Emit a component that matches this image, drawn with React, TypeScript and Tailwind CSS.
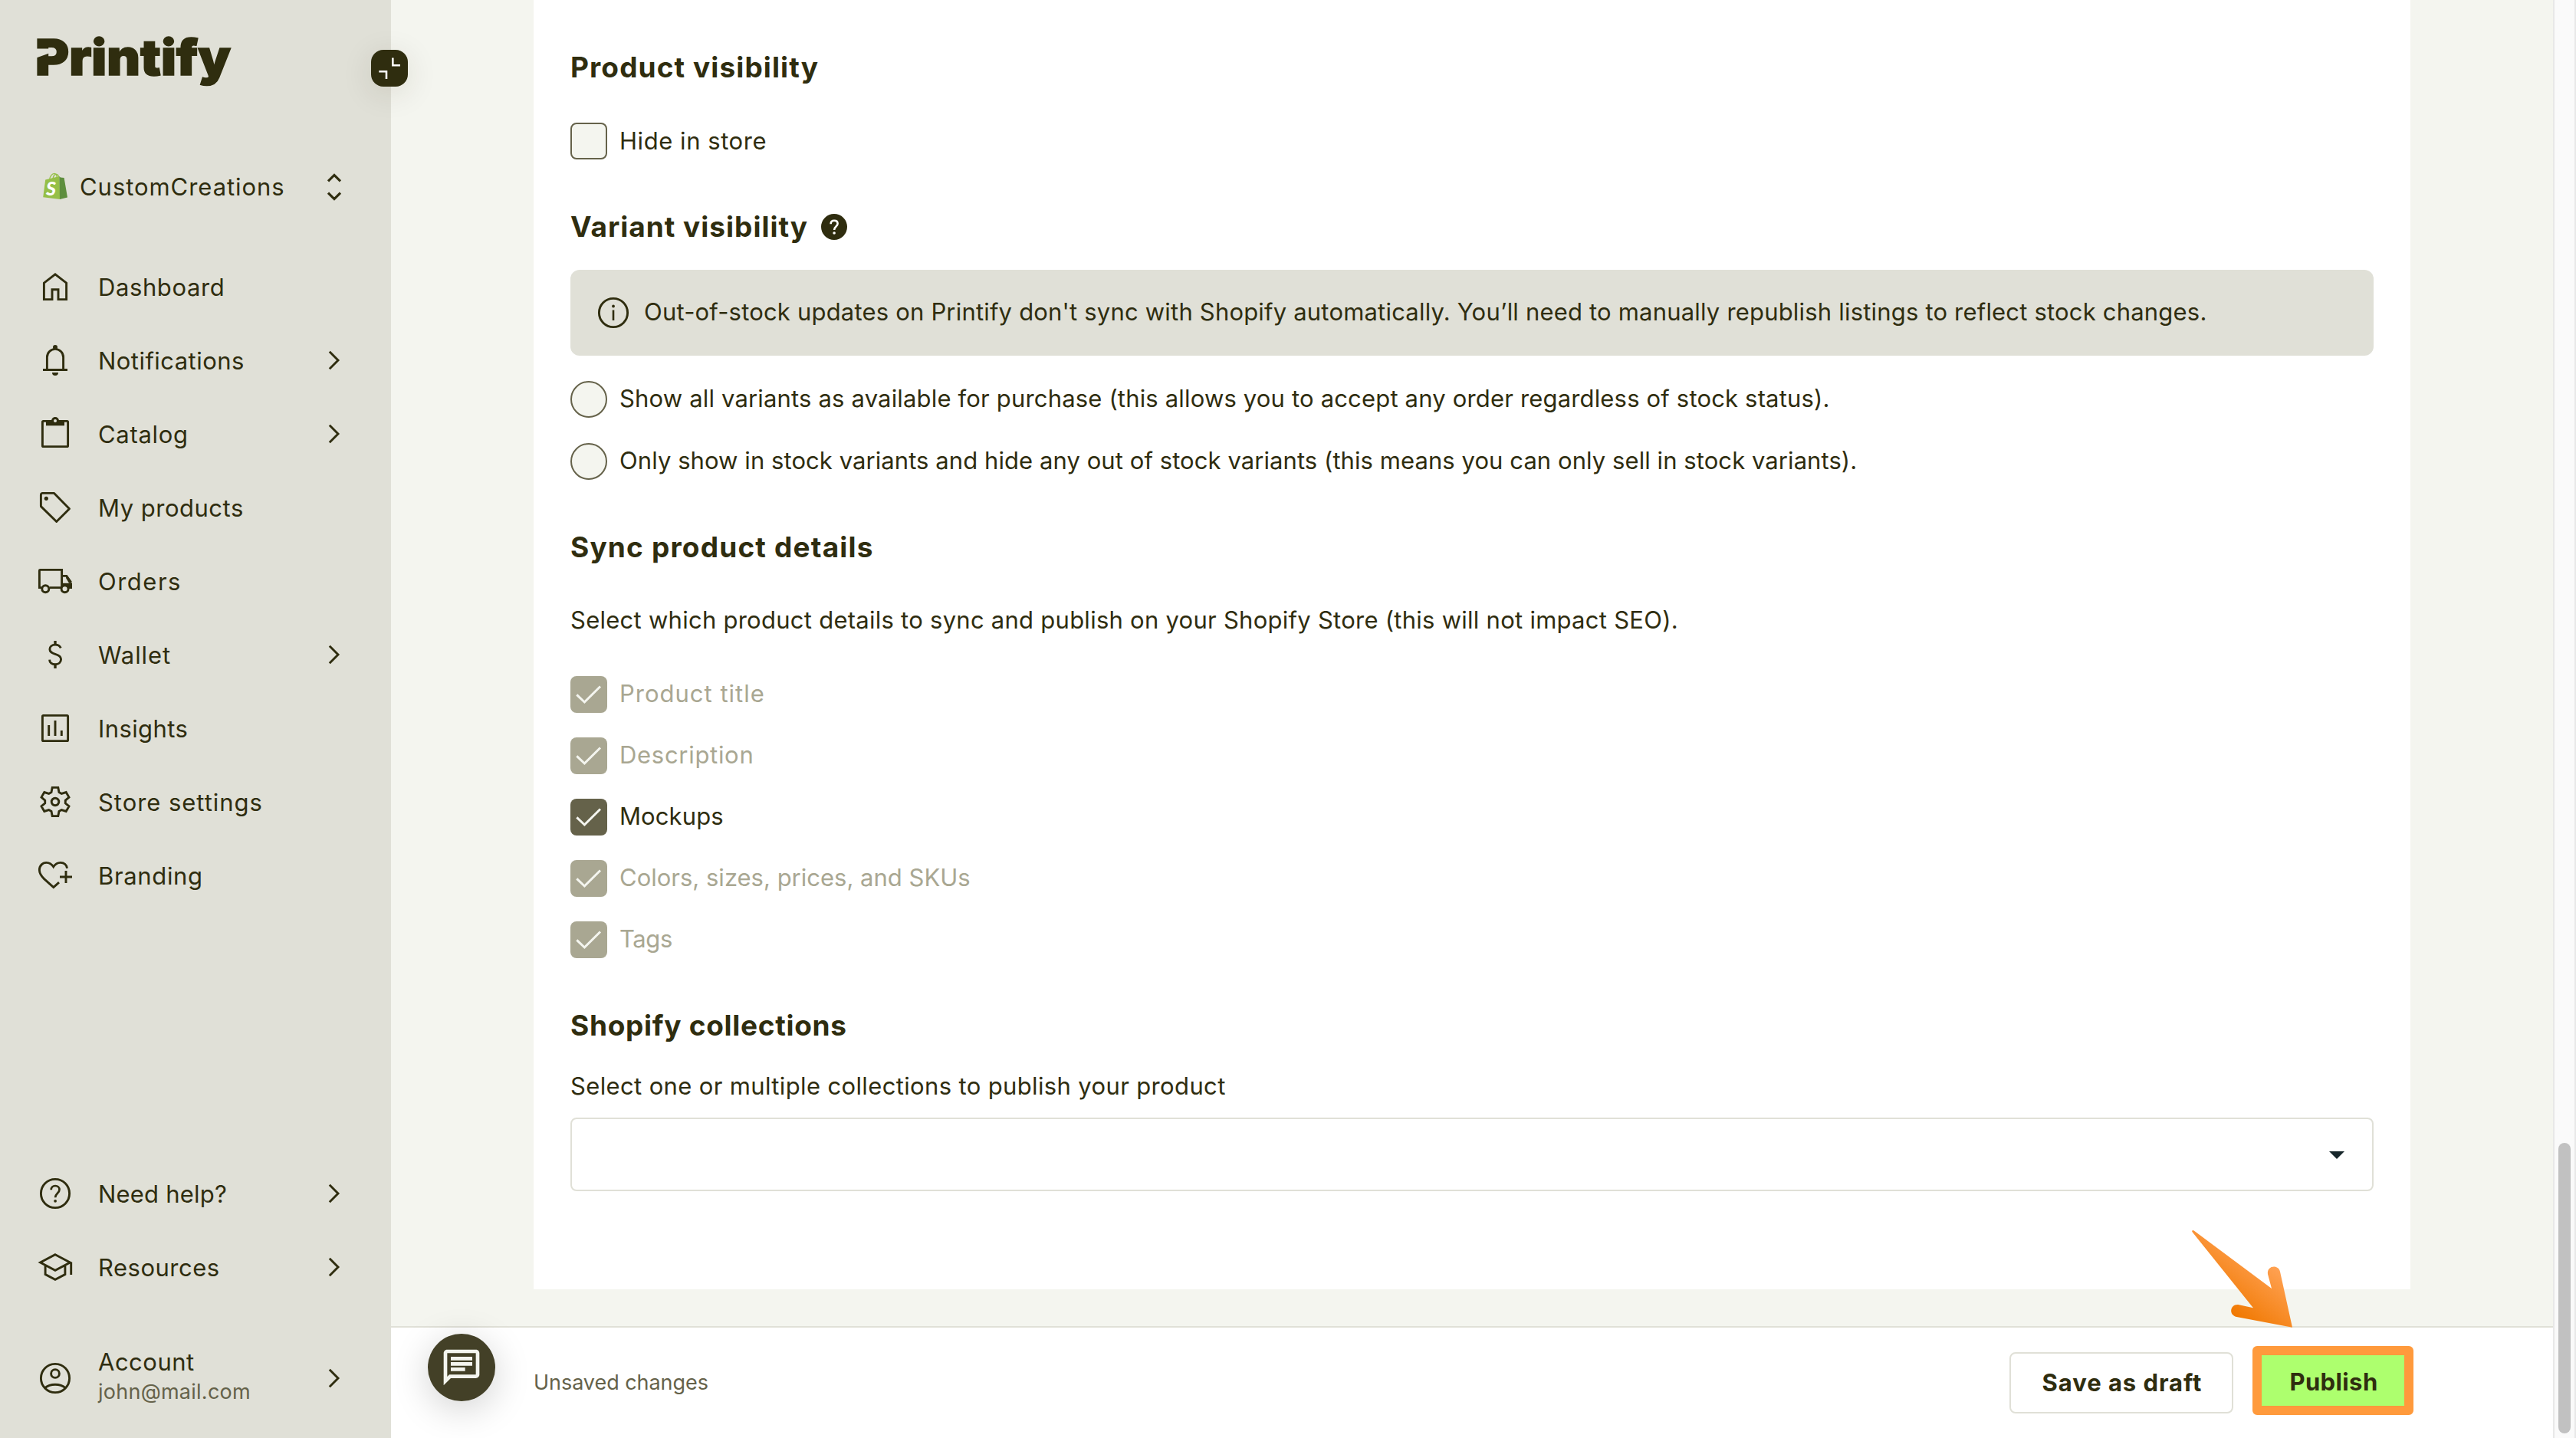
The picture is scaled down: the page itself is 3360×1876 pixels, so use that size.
import clsx from "clsx";
import type { ReactNode } from "react";

const svgProps = {
  viewBox: "0 0 48 48",
  fill: "none",
  stroke: "currentColor",
  strokeWidth: 2.9,
  className: "size-12 shrink-0",
};

function HomeIcon() {
  return (
    <svg {...svgProps}>
      <path d="M9.4 40.6V19.2L24 7.9l14.6 11.3v21.4H28V27.7h-8v12.9z" />
    </svg>
  );
}

function BellIcon() {
  return (
    <svg {...svgProps}>
      <path d="M13.4 36V20a10.6 10.6 0 0 1 21.2 0v16M8 36.5h32" />
      <circle cx="24" cy="7" r="3" fill="currentColor" stroke="none" />
      <path d="M20 40h8a4 4 0 0 1-8 0z" fill="currentColor" stroke="none" />
    </svg>
  );
}

function ClipboardIcon() {
  return (
    <svg {...svgProps}>
      <rect x="7.4" y="7.4" width="33.2" height="33.2" rx="1.2" />
      <path d="M12 7h24v6.3H12z" fill="currentColor" stroke="none" />
      <circle cx="24" cy="7" r="5" fill="currentColor" stroke="none" />
      <circle cx="24" cy="7" r="2" fill="#e0e0d7" stroke="none" />
    </svg>
  );
}

function TagIcon() {
  return (
    <svg {...svgProps} strokeLinejoin="round">
      <path d="M7.4 5.4h15.2l19.9 20.3-16.8 16.8L5.4 22.6V7.4a2 2 0 0 1 2-2z" />
      <circle cx="12.3" cy="12.3" r="2.6" fill="currentColor" stroke="none" />
    </svg>
  );
}

function TruckIcon() {
  return (
    <svg {...svgProps}>
      <path d="M6 32.6H3.4V10.4a1 1 0 0 1 1-1h28.2v23.2H16.5M32.6 17.4h6.2l5.8 8.2" />
      <path d="M34 26.8h12V34H34z" fill="currentColor" stroke="none" />
      <path d="M39.6 16.5 46 26.8h-4L38 20z" fill="currentColor" stroke="none" />
      <circle cx="11.3" cy="34.2" r="4.5" fill="#e0e0d7" />
      <circle cx="36.6" cy="34.2" r="4.5" fill="#e0e0d7" />
    </svg>
  );
}

function DollarIcon() {
  return (
    <svg {...svgProps}>
      <path d="M24 6v5.4M24 36.6V42" strokeWidth="3.4" />
      <path d="M31.3 15.4c-1.2-2.9-3.8-4.3-7.3-4.3-4.3 0-7.1 2.4-7.1 6 0 3.9 3 5.1 7.1 6.2 4.8 1.3 7.6 2.9 7.6 6.8 0 4.1-3.3 6.7-7.6 6.7s-7.3-2.3-7.4-6.2" />
    </svg>
  );
}

function InsightsIcon() {
  return (
    <svg {...svgProps}>
      <rect x="7.4" y="7.4" width="33.2" height="33.2" rx="1.2" />
      <path d="M15.7 20v14M24 14v20M32.3 27v7" />
    </svg>
  );
}

function GearIcon() {
  return (
    <svg {...svgProps}>
      <g transform="translate(24 24)">
        <path d="M-5-12.5-3.8-18.6H3.8L5-12.5 8.3-10.6 14.2-12.5 18-5.9 13.3-1.9V1.9L18 5.9 14.2 12.5 8.3 10.6 5 12.5 3.8 18.6H-3.8L-5 12.5-8.3 10.6-14.2 12.5-18 5.9-13.3 1.9V-1.9L-18-5.9-14.2-12.5-8.3-10.6z" />
        <circle r="4.8" />
      </g>
    </svg>
  );
}

function HeartPlusIcon() {
  return (
    <svg {...svgProps}>
      <path d="M29 33.2l-7.2 6.3L9.6 28.6C5.8 24.8 3.4 21.4 3.4 16.9c0-5.4 4-9.5 9-9.5 4 0 7.1 2 9.3 5.4 2.2-3.4 5.3-5.4 9.2-5.4 4.6 0 7.8 2.8 8.7 7.4" />
      <path d="M38 18v16M30 26h16" />
    </svg>
  );
}

function HelpIcon() {
  return (
    <svg {...svgProps}>
      <circle cx="24" cy="24" r="18.6" />
      <path d="M18.7 19.3c0-3.3 2.2-5.3 5.4-5.3s5.4 2 5.4 5c0 4.6-5.4 5-5.4 10.3" strokeWidth="2.7" />
      <circle cx="24.1" cy="33.8" r="1.9" fill="currentColor" stroke="none" />
    </svg>
  );
}

function GraduationIcon() {
  return (
    <svg {...svgProps}>
      <path d="M24 7.7 43.4 18 24 28.4 4.6 18zM11.1 21.6v12L24 40.4l12.9-6.8v-12M44.7 17.5V34" />
    </svg>
  );
}

function AccountIcon() {
  return (
    <svg {...svgProps}>
      <circle cx="24" cy="24" r="18.6" />
      <circle cx="24" cy="18" r="5.4" />
      <path d="M10.8 36.6c3.3-3 7.8-4.3 13.2-4.3s9.9 1.3 13.2 4.3" />
    </svg>
  );
}

function ChevronIcon() {
  return (
    <svg {...svgProps}>
      <path d="M17.8 12.8 29 24 17.8 35.2" />
    </svg>
  );
}

function UpDownIcon() {
  return (
    <svg {...svgProps} strokeWidth="3.2">
      <path d="M16 16.3l8-7.9 8 7.9M16 31.7l8 7.9 8-7.9" />
    </svg>
  );
}

function ShopifyIcon() {
  return (
    <svg viewBox="0 0 48 48" className="size-12 shrink-0">
      <path
        d="M16.5 14.5c.8-4.500 3.500-8.200 6.300-8.200 2.200 0 3.400 2.400 3.400 5.700M21 13c.7-3.600 2.600-6 4.700-5.700 1.800.3 2.800 2.200 3 4.500"
        fill="none"
        stroke="#95bf47"
        strokeWidth="1.3"
      />
      <path d="M11.2 14.6 29.3 10 30.3 40 8.200 37.200z" fill="#95bf47" />
      <path d="M29.300 10 31 11.600 35.600 12 40 37.600 30 40z" fill="#5e8e3e" />
      <text x="12" y="35" fontSize="25" fontWeight="900" fontStyle="italic" fontFamily="Lato, sans-serif" fill="#fff">
        S
      </text>
    </svg>
  );
}

const mainMenu = [
  { label: "Dashboard", icon: HomeIcon, tracking: "tracking-[0.6px]" },
  { label: "Notifications", icon: BellIcon, tracking: "tracking-[0.45px]", expandable: true },
  { label: "Catalog", icon: ClipboardIcon, tracking: "tracking-[0.7px]", expandable: true },
  { label: "My products", icon: TagIcon, tracking: "tracking-[0.5px]" },
  { label: "Orders", icon: TruckIcon, tracking: "tracking-[1.5px]" },
  { label: "Wallet", icon: DollarIcon, tracking: "tracking-[0.9px]", expandable: true },
  { label: "Insights", icon: InsightsIcon, tracking: "tracking-[0.4px]" },
  { label: "Store settings", icon: GearIcon, tracking: "tracking-[0.95px]" },
  { label: "Branding", icon: HeartPlusIcon, tracking: "tracking-[0.65px]" },
];

const helpMenu = [
  { label: "Need help?", icon: HelpIcon, tracking: "tracking-[0.2px]", expandable: true },
  { label: "Resources", icon: GraduationIcon, tracking: "tracking-[0.5px]", expandable: true },
];

const syncOptions = [
  { label: "Product title", tracking: "tracking-[1px]", disabled: true },
  { label: "Description", tracking: "tracking-[0.7px]", disabled: true },
  { label: "Mockups", tracking: "tracking-[0.1px]", disabled: false },
  { label: "Colors, sizes, prices, and SKUs", tracking: "tracking-normal", disabled: true },
  { label: "Tags", tracking: "tracking-[-0.4px]", disabled: true },
];

type MenuItem = {
  label: string;
  icon: () => ReactNode;
  tracking: string;
  expandable?: boolean;
};

function MenuRow({ label, icon: Icon, tracking, expandable }: MenuItem) {
  return (
    <a className="flex h-24 items-center pr-[50px] pl-12">
      <Icon />
      <span className={clsx("ml-8 flex-1 pt-px", tracking)}>{label}</span>
      {expandable && <ChevronIcon />}
    </a>
  );
}

function Logo() {
  return (
    <svg width="270" height="110" viewBox="0 0 270 110" className="overflow-visible">
      <text
        x="0"
        y="70"
        fontSize="65"
        fontWeight="900"
        fontFamily="Inter, sans-serif"
        textLength="255"
        lengthAdjust="spacingAndGlyphs"
        fill="currentColor"
        stroke="currentColor"
        strokeWidth="1.5"
      >
        Printify
      </text>
      {/* Notch cut through the stem of the P */}
      <path d="M0 35.500h25v3.500L0 48z" fill="#e0e0d7" />
    </svg>
  );
}

function Sidebar() {
  return (
    <aside className="relative flex w-[510px] shrink-0 flex-col bg-[#e0e0d7]">
      <div className="flex h-[196px] items-start pt-[28px] pl-[46px]">
        <Logo />
      </div>

      {/* Collapse button sits over the sidebar's edge */}
      <button className="absolute top-[65px] left-[484px] z-10 size-12 rounded-2xl bg-[#2f2d0f] text-white shadow-[0_8px_40px_rgba(47,45,15,0.12)]">
        <svg viewBox="0 0 48 48" fill="none" stroke="currentColor" strokeWidth="2.6" className="size-12">
          <path d="M28.3 10.5V20.3H38M10.3 28.3H20V38" />
        </svg>
      </button>

      <div className="flex h-24 items-center pr-[50px] pl-12">
        <ShopifyIcon />
        <span className="ml-2 flex-1 tracking-[0.95px]">CustomCreations</span>
        <UpDownIcon />
      </div>

      <nav className="mt-[34px] flex flex-col">
        {mainMenu.map((item) => (
          <MenuRow key={item.label} {...item} />
        ))}
      </nav>

      <nav className="mt-auto flex flex-col">
        {helpMenu.map((item) => (
          <MenuRow key={item.label} {...item} />
        ))}
      </nav>
      <div className="mt-[49px] mb-[30px] flex h-24 items-center pr-[50px] pl-12">
        <AccountIcon />
        <div className="ml-8 flex flex-1 flex-col pb-[7px]">
          <span className="leading-[42px] tracking-[0.5px]">Account</span>
          <span className="text-[27px] leading-[35px] tracking-[0.25px] text-[#65624a]">john@mail.com</span>
        </div>
        <ChevronIcon />
      </div>
    </aside>
  );
}

function Heading({ children, className }: { children: ReactNode; className?: string }) {
  return <h2 className={clsx("text-[37px] leading-[52px] font-bold", className)}>{children}</h2>;
}

function Radio({ label, className }: { label: string; className: string }) {
  return (
    <label className="flex h-12 items-center gap-4">
      <span className="size-12 shrink-0 rounded-full border-2 border-[#65624a] bg-[#f4f5ef]" />
      <span className={clsx("pb-[3px]", className)}>{label}</span>
    </label>
  );
}

function CheckedBox({ label, tracking, disabled }: { label: string; tracking: string; disabled: boolean }) {
  return (
    <label className={clsx("flex h-12 items-center gap-4", disabled && "text-[#a9a792]")}>
      <span
        className={clsx("size-12 shrink-0 rounded-lg text-[#f4f5ef]", disabled ? "bg-[#a9a792]" : "bg-[#65624a]")}
      >
        <svg viewBox="0 0 48 48" fill="none" stroke="currentColor" strokeWidth="3" className="size-12">
          <path d="M8.3 24.3 18.4 34 39 13.5" />
        </svg>
      </span>
      <span className={clsx("pb-0.5", tracking)}>{label}</span>
    </label>
  );
}

function PublishForm() {
  return (
    <div className="mx-[186px] h-[1682px] bg-white px-12 pt-[62px]">
      <Heading className="tracking-[1.1px]">Product visibility</Heading>
      <label className="mt-[46px] flex h-12 items-center gap-4">
        <span className="size-12 rounded-lg border-2 border-[#65624a] bg-[#f4f5ef]" />
        <span className="pb-px tracking-[0.55px]">Hide in store</span>
      </label>

      <div className="mt-[62px] flex items-center gap-[17px]">
        <Heading className="tracking-[1px]">Variant visibility</Heading>
        <svg viewBox="0 0 34 34" className="size-[34px]" fill="none" stroke="#fff" strokeWidth="2.6">
          <circle cx="17" cy="17" r="17" fill="#2f2d0f" stroke="none" />
          <path d="M12.6 13.2c0-2.8 1.8-4.5 4.5-4.5s4.5 1.7 4.5 4.1c0 3.7-4.5 3.9-4.5 8.2" />
          <circle cx="17.1" cy="25" r="1.8" fill="#fff" stroke="none" />
        </svg>
      </div>

      <div className="mt-[30px] flex h-28 items-center gap-4 rounded-xl bg-[#e0e0d7] pl-8">
        <svg {...svgProps}>
          <circle cx="24" cy="24" r="18.6" />
          <path d="M24 20.5V34" strokeWidth="2.6" />
          <circle cx="24" cy="15.5" r="1.9" fill="currentColor" stroke="none" />
        </svg>
        <span className="pb-0.5 tracking-[0.19px]">
          Out-of-stock updates on Printify don't sync with Shopify automatically. You’ll need to manually republish
          listings to reflect stock changes.
        </span>
      </div>

      <div className="mt-[33px] flex flex-col gap-[33px]">
        <Radio
          label="Show all variants as available for purchase (this allows you to accept any order regardless of stock status)."
          className="tracking-[0.17px]"
        />
        <Radio
          label="Only show in stock variants and hide any out of stock variants (this means you can only sell in stock variants)."
          className="tracking-[0.07px]"
        />
      </div>

      <Heading className="mt-[62px] tracking-[1.18px]">Sync product details</Heading>
      <p className="mt-[49px] leading-10 tracking-[0.26px]">
        Select which product details to sync and publish on your Shopify Store (this will not impact SEO).
      </p>
      <div className="mt-[53px] flex flex-col gap-8">
        {syncOptions.map((option) => (
          <CheckedBox key={option.label} {...option} />
        ))}
      </div>

      <Heading className="mt-[62px] tracking-[0.7px]">Shopify collections</Heading>
      <p className="mt-[33px] leading-10 tracking-[0.36px]">
        Select one or multiple collections to publish your product
      </p>
      <div className="mt-[21px] flex h-24 items-center justify-end rounded-lg border-2 border-[#e0e0d7] pt-0.5 pr-9">
        <svg width="20" height="10" viewBox="0 0 20 10">
          <path d="M0 0h20L10 10z" fill="#17262b" />
        </svg>
      </div>
    </div>
  );
}

function Footer() {
  return (
    <footer className="flex h-[146px] shrink-0 items-start border-t-2 border-[#e0e0d7] bg-white pr-[182px] pl-[186px]">
      <span className="flex-1 self-center text-[27px] tracking-[-0.05px] text-[#65624a]">Unsaved changes</span>
      <button className="mt-8 flex h-20 w-[292px] items-center justify-center rounded-lg border-2 border-[#e0e0d7] pb-px pl-0.5 font-bold tracking-[0.95px]">
        Save as draft
      </button>
      <button className="mt-6 ml-[25px] flex h-[90px] w-[210px] items-center justify-center rounded-md border-12 border-[#ff9a3c] bg-[#adff6e] pt-1 pl-0.5 font-bold tracking-[0.4px]">
        Publish
      </button>
    </footer>
  );
}

function ChatButton() {
  return (
    <button className="absolute top-[1740px] left-[558px] flex size-[88px] items-center justify-center rounded-full bg-[#434027] text-[#f4f5ef] shadow-[0_10px_48px_rgba(0,0,0,0.18)]">
      <svg viewBox="0 0 24 24" fill="currentColor" className="size-14">
        <path d="M4 4h16v12H5.17L4 17.17V4m0-2c-1.1 0-1.99.9-1.99 2L2 22l4-4h14c1.1 0 2-.9 2-2V4c0-1.1-.9-2-2-2H4zm2 10h8v2H6v-2zm0-3h12v2H6V9zm0-3h12v2H6V6z" />
      </svg>
    </button>
  );
}

// Callout arrow that points at the publish button
function CalloutArrow() {
  return (
    <svg viewBox="0 0 540 450" className="absolute top-[1590px] left-[2840px] h-[150px] w-[180px]">
      <defs>
        <linearGradient id="arrow" gradientUnits="userSpaceOnUse" x1="245" y1="400" x2="400" y2="200">
          <stop offset="0" stopColor="#f07800" />
          <stop offset="1" stopColor="#ffa152" />
        </linearGradient>
      </defs>
      <path
        d="M58 51c-2-5 3-8 8-4L369 273 354 217c-5-36 43-39 48-10L450 425 232 384c-33-8-25-51 6-48l59 13z"
        fill="url(#arrow)"
      />
    </svg>
  );
}

export default function App() {
  return (
    <div className="relative flex h-[1876px] w-[3360px] overflow-hidden bg-[#f4f5ef] font-[Inter,'Liberation_Sans',sans-serif] text-[31px] leading-10 text-[#2f2d0f]">
      <Sidebar />
      <main className="flex min-w-0 flex-1 flex-col">
        <div className="h-[1730px] overflow-hidden">
          <PublishForm />
        </div>
        <Footer />
      </main>

      {/* Scrollbar */}
      <div className="flex w-[30px] flex-col items-center border-r-2 border-l-2 border-[#e8e8e8] bg-[#fafafa] pt-[1491px]">
        <div className="h-[379px] w-4 rounded-full bg-[#c1c1c1]" />
      </div>

      <ChatButton />
      <CalloutArrow />
    </div>
  );
}
